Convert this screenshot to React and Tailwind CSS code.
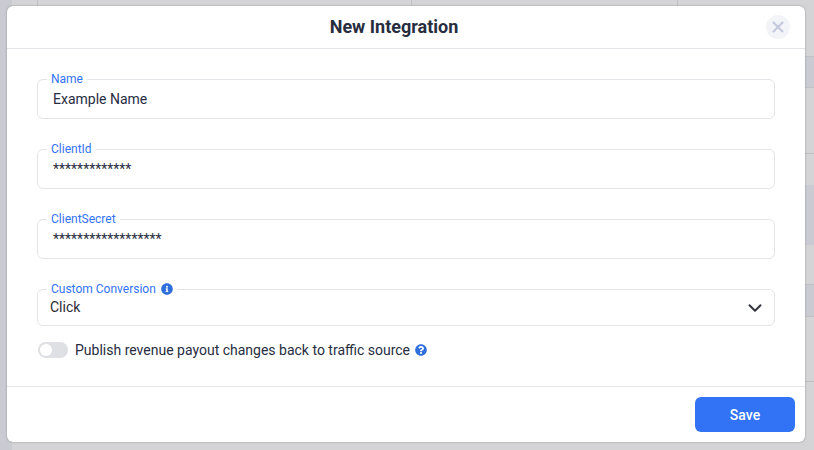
import { ChevronDown, X } from "lucide-react";

function Field({ label, value }) {
  return (
    <div className="relative h-10 border border-[#e3e4e8] rounded-md flex items-center pl-[15px]">
      <label className="absolute -top-[8px] left-[9px] bg-white px-1 text-xs leading-[14px] text-[#3273f6]">{label}</label>
      <span className="text-sm text-[#272d3f]">{value}</span>
    </div>
  );
}

function InfoIcon() {
  return (
    <svg viewBox="0 0 512 512" className="w-3 h-3" fill="#2f6fdc">
      <path d="M256 8C119 8 8 119 8 256s111 248 248 248 248-111 248-248S393 8 256 8zm0 110a42 42 0 1 1 0 84 42 42 0 0 1 0-84zm56 254c0 7-5 12-12 12h-88c-7 0-12-5-12-12v-24c0-7 5-12 12-12h12v-64h-12c-7 0-12-5-12-12v-24c0-7 5-12 12-12h64c7 0 12 5 12 12v100h12c7 0 12 5 12 12v24z" />
    </svg>
  );
}

function QuestionIcon() {
  return (
    <svg viewBox="0 0 512 512" className="w-3 h-3" fill="#2f6fdc">
      <path d="M504 256c0 137-111 248-248 248S8 393 8 256 119 8 256 8s248 111 248 248zM263 90c-54 0-89 23-116 63-4 5-3 12 3 16l35 26c5 4 13 3 17-2 18-23 30-36 58-36 21 0 47 14 47 34 0 15-13 23-33 35-24 13-55 30-55 71v4c0 7 5 12 12 12h56c7 0 12-5 12-12v-1c0-29 84-30 84-107 0-58-60-103-120-103zm-7 248a46 46 0 1 0 0 92 46 46 0 0 0 0-92z" />
    </svg>
  );
}

function Backdrop() {
  return (
    <div className="absolute inset-0 flex bg-[#d4d4d6]">
      <div className="w-3 bg-[#c9cad2]" />
      <div className="flex-1 flex flex-col">
        <div className="h-[57px] shrink-0 border-b border-[#bfc0c4] flex">
          <div className="w-[26px] border-r border-[#bfc0c4]" />
          <div className="w-[374px] border-r border-[#bfc0c4]" />
          <div className="w-[266px] border-r border-[#bfc0c4]" />
        </div>
        <div className="h-[31px] shrink-0 bg-[#c9cad2] border-b border-[#bfc0c4]" />
        <div className="h-[66px] shrink-0 border-b border-[#bfc0c4]" />
        <div className="h-[31px] shrink-0" />
        <div className="h-[60px] shrink-0 bg-[#c9cad2]" />
        <div className="h-[40px] shrink-0 border-b border-[#bfc0c4]" />
        <div className="h-[32px] shrink-0 bg-[#c9cad2] border-b border-[#bfc0c4]" />
        <div className="h-[65px] shrink-0 border-b border-[#bfc0c4]" />
      </div>
    </div>
  );
}

export default function App() {
  return (
    <div className="relative h-[450px] w-[814px] overflow-hidden" style={{ fontFamily: "Roboto, sans-serif" }}>
      <Backdrop />
      {/* modal */}
      <div className="absolute left-[7px] top-[6px] w-[798px] h-[436px] bg-white rounded-md flex flex-col shadow-[0_0_2px_rgba(0,0,0,0.35)]">
        <div className="relative h-[43px] shrink-0 border-b border-[#e3e4e8] flex items-center justify-center pr-[24px]">
          <h1 className="text-lg font-bold text-[#272d3f]">New Integration</h1>
          <button className="absolute right-[15px] top-[9px] w-6 h-6 rounded-full bg-[#f3f4f8] flex items-center justify-center">
            <X size={18} strokeWidth={2.8} color="#c5c9de" />
          </button>
        </div>
        <div className="flex-1 px-[30px] pt-[30px]">
          <div className="flex flex-col gap-[30px]">
            <Field label="Name" value="Example Name" />
            <Field label="ClientId" value="*************" />
            <Field label="ClientSecret" value="******************" />
            <div className="relative h-[37px] border border-[#e3e4e8] rounded-md flex items-center justify-between pl-3 pr-[8px]">
              <label className="absolute -top-[8px] left-[9px] bg-white px-1 flex items-center gap-[5px] text-xs leading-[14px] text-[#3273f6]">
                Custom Conversion
                <InfoIcon />
              </label>
              <span className="text-sm text-[#2a2c33] pb-0.5">Click</span>
              <ChevronDown size={22} strokeWidth={2.2} color="#333640" />
            </div>
          </div>
          <div className="mt-[14px] flex items-center">
            <div className="w-[30px] h-4 ml-px rounded-full bg-[#dfe0e3] p-0.5">
              <div className="w-3 h-3 rounded-full bg-white" />
            </div>
            <span className="ml-[7px] text-sm text-[#272d3f]">Publish revenue payout changes back to traffic source</span>
            <span className="ml-[5px]">
              <QuestionIcon />
            </span>
          </div>
        </div>
        <div className="h-[56px] shrink-0 border-t border-[#e3e4e8] flex items-center justify-end pr-[10px]">
          <button className="w-[100px] h-[35px] rounded-md bg-[#3273f6] text-white text-sm font-medium">Save</button>
        </div>
      </div>
    </div>
  );
}
